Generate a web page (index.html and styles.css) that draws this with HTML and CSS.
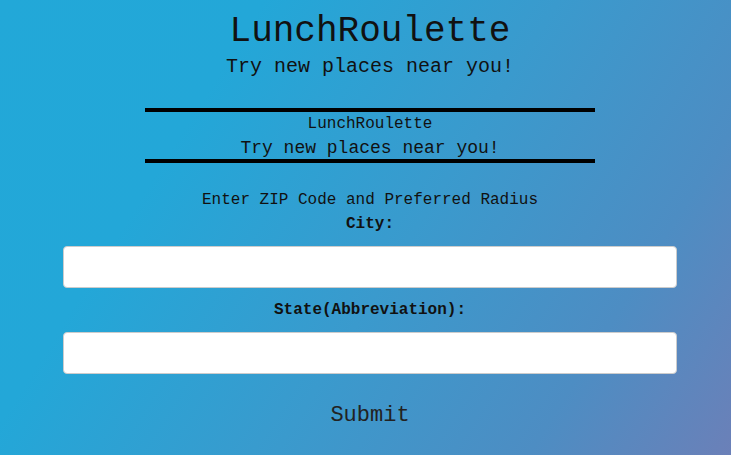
FILE: index.html
```html
<!DOCTYPE html>
<html lang="en">
<head>
<meta charset="utf-8">
<title>LunchRoulette</title>
<link rel="stylesheet" href="styles.css">
</head>
<body>
<main class="page">
  <header class="hero">
    <h1 class="hero-title">LunchRoulette</h1>
    <p class="hero-sub">Try new places near you!</p>
  </header>
  <section class="banner">
    <p class="banner-title">LunchRoulette</p>
    <p class="banner-sub">Try new places near you!</p>
  </section>
  <form class="form">
    <p class="form-intro">Enter ZIP Code and Preferred Radius</p>
    <label class="field-label" for="city">City:</label>
    <input class="field-input" id="city" type="text">
    <label class="field-label" for="state">State(Abbreviation):</label>
    <input class="field-input" id="state" type="text">
    <button class="submit" type="button">Submit</button>
  </form>
</main>
</body>
</html>
```
FILE: styles.css
```css
html, body {
  margin: 0;
  padding: 0;
  height: 100%;
}
body {
  font-family: "Liberation Mono", "Courier New", monospace;
  color: #111;
  background: linear-gradient(122deg, #22a8d8 0%, #23a7d8 26%, #3a9acd 55%, #4d8dc3 80%, #6b80b8 100%);
  overflow: hidden;
}
.page {
  margin-left: 9px;
  display: flex;
  flex-direction: column;
  align-items: center;
  padding-top: 12px;
}
.hero {
  display: flex;
  flex-direction: column;
  align-items: center;
}
.hero-title {
  margin: 0;
  font-weight: normal;
  font-size: 36px;
  line-height: 40px;
}
.hero-sub {
  margin: 3px 0 0;
  font-size: 20px;
  line-height: 24px;
}
.banner {
  margin-top: 29px;
  width: 450px;
  border-top: 4px solid #000;
  border-bottom: 4px solid #000;
  display: flex;
  flex-direction: column;
  align-items: center;
}
.banner p { margin: 0; }
.banner-title {
  font-size: 16px;
  line-height: 24px;
}
.banner-sub {
  margin-top: 2px !important;
  font-size: 18px;
  line-height: 21px;
}
.form {
  margin-top: 25px;
  display: flex;
  flex-direction: column;
  align-items: center;
}
.form-intro {
  margin: 0;
  font-size: 16px;
  line-height: 24px;
}
.field-label {
  font-size: 16px;
  line-height: 24px;
  font-weight: bold;
}
.field-input {
  box-sizing: border-box;
  width: 614px;
  height: 42px;
  margin: 10px 0;
  border: 1px solid #ccc;
  border-radius: 4px;
  background: #fff;
  padding: 0 12px;
  font: inherit;
}
.submit {
  margin-top: 19px;
  background: none;
  border: none;
  padding: 0;
  font-family: "Liberation Mono", "Courier New", monospace;
  font-size: 22px;
  line-height: 26px;
  color: #222;
  cursor: pointer;
}
```
